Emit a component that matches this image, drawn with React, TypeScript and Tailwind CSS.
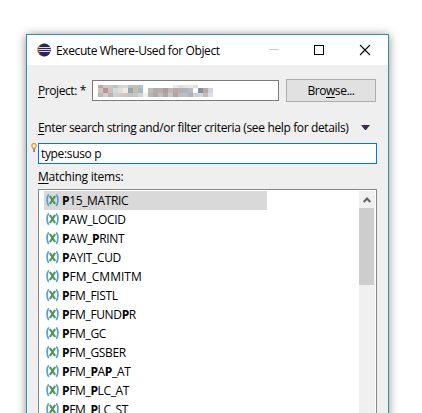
import React from "react";

// Names containing the search term; asterisks mark the highlighted letters.
const items = [
  "*P*15_MATRIC",
  "*P*AW_LOCID",
  "*P*AW_*P*RINT",
  "*P*AYIT_CUD",
  "*P*FM_CMMITM",
  "*P*FM_FISTL",
  "*P*FM_FUND*P*R",
  "*P*FM_GC",
  "*P*FM_GSBER",
  "*P*FM_*P*A*P*_AT",
  "*P*FM_*P*LC_AT",
  "*P*FM_*P*LC_ST",
];

const mosaic: string[][] = [
  ["#b5aaa6", "#c9c9c9", "#d0c4c4", "#c0c2c4", "#cfd3d4", "#d8d5d2", "#b8c2c4", "#c3c0b4", "#a9c5d2", "#fff", "#fff", "#fff", "#fff", "#fff", "#fff", "#ececec", "#e3dede", "#f0e1e0", "#e8ebed", "#dedfe0", "#fff", "#fff", "#fff"],
  ["#cfc5bd", "#b59694", "#d4bebd", "#d3dbda", "#e4e1dd", "#efebe5", "#9ba4a5", "#c8bcad", "#a4b8c6", "#fff", "#bdbcbc", "#b2aaab", "#b5adae", "#aaa0a3", "#c0b5b8", "#b8aaa9", "#b7aeb0", "#a8b6c0", "#b8babf", "#fff", "#8b8b9c", "#b8aaa2", "#d2d4e6"],
  ["#bab7b6", "#d1ccc9", "#bcb0b0", "#cbd0d1", "#d0c9c6", "#d2c1c0", "#b9c4c5", "#c3c5c6", "#cfd4d7", "#f3eeee", "#b8b4b4", "#b0a8a7", "#c5bfbc", "#b4a6a7", "#c4c6c7", "#ada2a4", "#c7b9b7", "#b8c1c8", "#b6b0b4", "#c5d3d3", "#d4d5db", "#c3b9bb", "#e2dde8"],
];

function Label({ text }: { text: string }) {
  return (
    <>
      {text.split("*").map((part, i) =>
        i % 2 ? <b key={i} className="font-bold">{part}</b> : <span key={i}>{part}</span>
      )}
    </>
  );
}

function VariableIcon() {
  return (
    <svg className="mr-[3px] h-[13px] w-[13px] shrink-0" viewBox="0 0 13 13" fill="none">
      <path d="M2.8.4C.5 2.8.5 9.2 2.8 11.9M10.2.4C12.5 2.8 12.5 9.2 10.2 11.9" stroke="#5b9fd6" strokeWidth="1.7" />
      <path d="M3.9 2 9.1 10M9.1 2 3.9 10" stroke="#4b9557" strokeWidth="2.2" />
    </svg>
  );
}

function EclipseIcon() {
  return (
    <svg className="h-[14px] w-[14px] shrink-0" viewBox="0 0 14 14">
      <circle cx="6.5" cy="7" r="6.5" fill="#f39a35" />
      <circle cx="7.5" cy="7" r="6.4" fill="#2c2556" />
      <path d="M1.8 4.5H13.4M1.2 6.5H13.8M1.8 8.5H13.4" stroke="#dcd9ea" strokeWidth="1" />
    </svg>
  );
}

export default function App() {
  return (
    <div className="h-[413px] w-[422px] overflow-hidden bg-white pt-[34px] pl-[26px] font-['Open_Sans','Noto_Sans',sans-serif] text-[12px] leading-[19px] text-black">
      <div className="flex h-[400px] w-[363px] flex-col border border-[#3b8ba3] bg-[#efefef] shadow-[0_1px_9px_rgba(0,0,0,0.45)]">
        <header className="flex h-[30px] shrink-0 items-center bg-white pl-[10px]">
          <EclipseIcon />
          <h1 className="ml-[5px] w-[186px] whitespace-nowrap tracking-[-0.39px]">Execute Where-Used for Object</h1>
          <svg className="ml-auto h-[12px] w-[120px] shrink-0" viewBox="0 0 120 12" fill="none" shapeRendering="crispEdges">
            <path d="M1 5.5H11" stroke="#c9c9c9" />
            <rect x="46.5" y="1.5" width="9" height="9" stroke="black" />
            <path d="M92 1 102 11M102 1 92 11" stroke="black" strokeWidth="1.1" shapeRendering="auto" />
          </svg>
        </header>

        <div className="mt-[14px] flex h-[23px] shrink-0 items-center pl-[11px]">
          <span className="w-[54px] whitespace-nowrap tracking-[-0.42px]">
            <u className="underline-offset-2">P</u>roject: *
          </span>
          <div className="flex h-[21px] w-[187px] items-center border border-[#7a7a7a] bg-white pl-[5px]">
            <div className="grid grid-cols-[repeat(23,5px)] grid-rows-[3px_5px_4px]">
              {mosaic.flat().map((color, i) => (
                <i key={i} style={{ backgroundColor: color }} />
              ))}
            </div>
          </div>
          <button className="ml-[7px] h-[23px] w-[90px] border border-[#adadad] bg-[#e1e1e1] text-center leading-[20px] tracking-[-0.45px]">
            Bro<u className="underline-offset-2">w</u>se...
          </button>
        </div>

        <div className="mt-[15px] flex h-[20px] shrink-0 items-center pl-[11px]">
          <span className="w-[323px] whitespace-nowrap tracking-[-0.36px]">
            <u className="underline-offset-2">E</u>nter search string and/or filter criteria (see help for details)
          </span>
          <svg className="h-[5px] w-[9px]" viewBox="0 0 9 5">
            <path d="M0 0H9L5 5H4Z" fill="#3c2b52" />
          </svg>
        </div>

        <div className="mt-[6px] flex h-[21px] shrink-0 pl-[4px]">
          <svg className="mr-px h-[9px] w-[6px]" viewBox="0 0 6 9" fill="none">
            <path d="M2 5.5V5L1 3.5V1.7L2 .7H4L5 1.7V3.5L4 5V5.5Z" fill="#fff3df" stroke="#df913c" strokeWidth="1.2" />
            <path d="M3 5.5V9" stroke="#8293a5" strokeWidth="2" />
          </svg>
          <div className="w-[339px] border border-[#0078d7] bg-white pl-[2px] tracking-[-0.35px]">type:suso p</div>
        </div>

        <div className="mt-[3px] h-[19px] shrink-0 pl-[11px] tracking-[-0.24px]">
          <u className="underline-offset-2">M</u>atching items:
        </div>

        <div className="mt-[3px] ml-[11px] flex h-[250px] w-[339px] shrink-0 border border-[#828790] bg-white pt-px">
          <ul className="w-[320px] pl-[5px]">
            {items.map((item, i) => (
              <li key={item} className={`flex h-[19px] w-[223px] items-center pl-[2px] whitespace-nowrap ${item.includes("CMMITM") ? "tracking-[0px]" : "tracking-[-0.35px]"} ${i === 0 ? "bg-[#d9d9d9]" : ""}`}>
                <VariableIcon />
                <span><Label text={item} /></span>
              </li>
            ))}
          </ul>
          <div className="w-[16px] bg-[#f0f0f0]">
            <div className="flex h-[17px] items-center justify-center">
              <svg className="h-[6px] w-[8px]" viewBox="0 0 8 6" fill="none">
                <path d="M.7 5 4 1.5 7.3 5" stroke="#606060" strokeWidth="2" />
              </svg>
            </div>
            <div className="h-[77px] w-[15px] bg-[#cdcdcd]" />
          </div>
        </div>
      </div>
    </div>
  );
}
